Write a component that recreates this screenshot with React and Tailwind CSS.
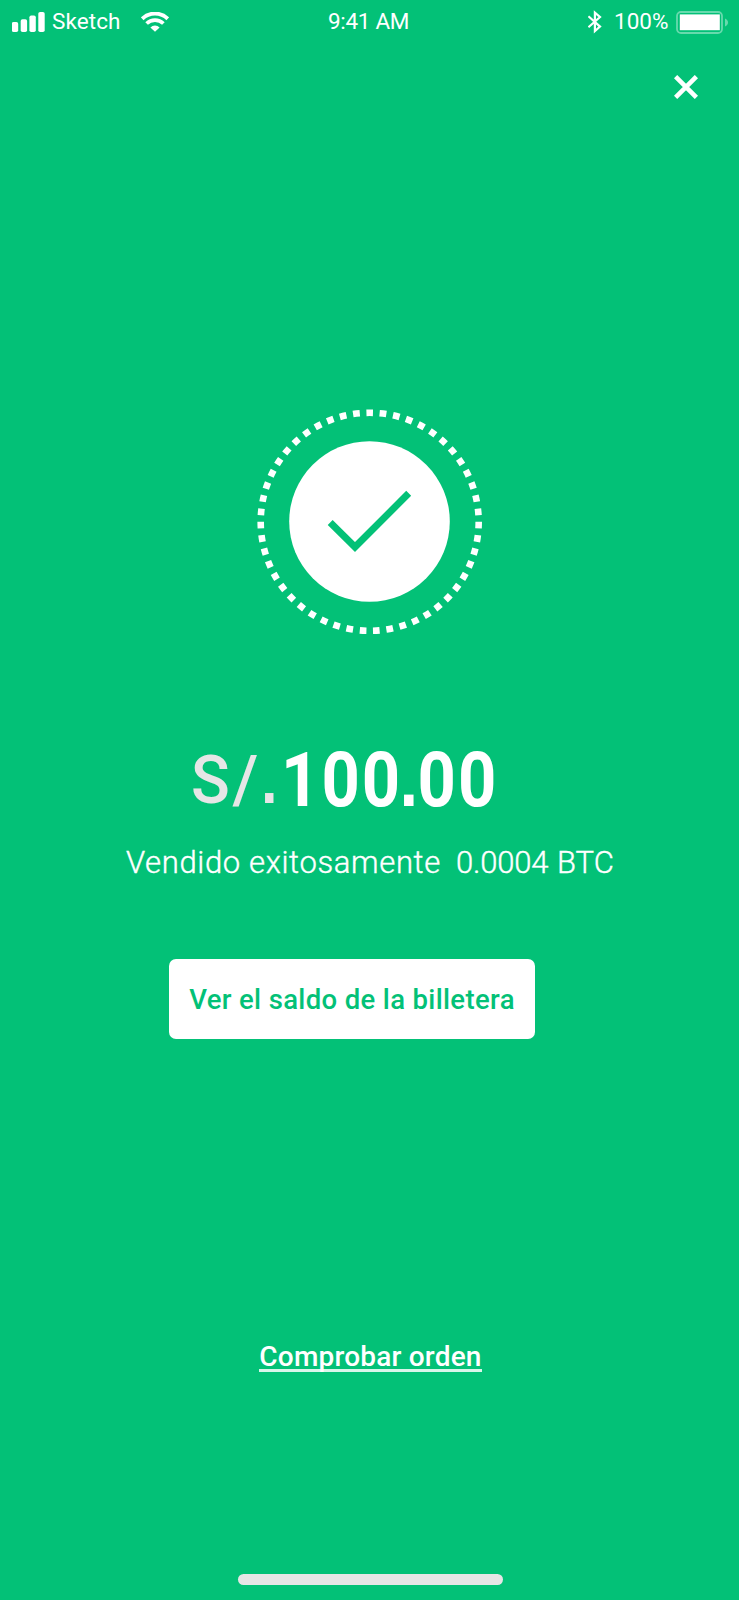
const RING_DASHES = 51;

function SignalBars() {
  return (
    <svg className="h-5 w-[33px]" viewBox="0 0 33 20" fill="currentColor">
      <rect x="-0.2" y="10" width="6.4" height="10" rx="1.8" />
      <rect x="8.7" y="7.2" width="6.4" height="12.8" rx="1.8" />
      <rect x="17.4" y="3.4" width="6.4" height="16.6" rx="1.8" />
      <rect x="26.3" y="0" width="6.4" height="20" rx="1.8" />
    </svg>
  );
}

function WifiIcon() {
  return (
    <svg className="h-5 w-7" viewBox="0 0 28 20" fill="none" stroke="currentColor" strokeWidth="4">
      <path d="M1.2 6.8a18.4 18.4 0 0 1 25.6 0" />
      <path d="M5.6 11.5a12 12 0 0 1 16.8 0" strokeWidth="3.7" />
      <path d="M9.4 15.4a6.5 6.5 0 0 1 9.2 0L14 19.8z" fill="currentColor" stroke="none" />
    </svg>
  );
}

function BluetoothIcon() {
  return (
    <svg className="h-6 w-[14px]" viewBox="0 0 14 24" fill="none" stroke="currentColor" strokeWidth="2.2">
      <path d="M0.4 6.2 12 16.6 6.9 21V2.6L12 7 0.4 17.3" />
    </svg>
  );
}

function BatteryIcon() {
  return (
    <svg className="h-[23px] w-[52px]" viewBox="0 0 52 23" fill="none">
      <rect x="1" y="1" width="45" height="21" rx="4" stroke="white" strokeOpacity="0.4" strokeWidth="1.8" />
      <rect x="3.8" y="3.4" width="40" height="15.8" fill="white" />
      <path d="M49 7.5c4 1.6 4 6.4 0 8z" fill="white" fillOpacity="0.4" />
    </svg>
  );
}

function StatusBar() {
  return (
    <header className="flex h-11 w-full items-start pt-2.5 text-[22.5px] leading-[22px]">
      <div className="ml-3 mt-0.5">
        <SignalBars />
      </div>
      <span className="ml-[7px] w-[89px] whitespace-nowrap tracking-[0.1px]">Sketch</span>
      <div className="mt-0.5">
        <WifiIcon />
      </div>
      <span className="ml-[159px] w-[260px] whitespace-nowrap tracking-[-0.3px]">9:41 AM</span>
      <BluetoothIcon />
      <span className="ml-3 w-[62px] whitespace-nowrap">100%</span>
      <div className="mt-px">
        <BatteryIcon />
      </div>
    </header>
  );
}

function SuccessBadge() {
  return (
    <svg className="h-[226px] w-[226px]" viewBox="0 0 226 226" fill="none">
      <circle
        cx="112.7"
        cy="112.8"
        r="109"
        stroke="white"
        strokeWidth="6.6"
        pathLength={RING_DASHES * 2}
        strokeDasharray="1 1"
        strokeDashoffset="0.5"
        transform="rotate(-90 112.7 112.8)"
      />
      <circle cx="112.5" cy="112.5" r="80.3" fill="white" />
      <path d="M73.2 113.4 98 138 151.7 84.3" stroke="#03c177" strokeWidth="7" />
    </svg>
  );
}

// Square decimal point, the rest of the amount is set in Roboto
function Point() {
  return <span className="font-['Liberation_Sans',sans-serif]">.</span>;
}

function Amount() {
  return (
    <div className="ml-[191px] mt-[99px] flex h-[90px] items-start whitespace-nowrap">
      <span className="w-[90px] text-[66px] leading-[92px] text-[#e6e6e6]">
        <span className="inline-block w-[41.5px] origin-left scale-x-[0.97] font-medium">S</span>
        <span className="inline-block w-[28px] font-medium">/</span>
        <span className="inline-block origin-left scale-x-[0.9] font-bold">
          <Point />
        </span>
      </span>
      <span className="origin-left scale-x-[0.88] text-[76px] font-bold leading-[92px] tracking-[2.3px]">
        100
        <span className="-mx-[3px]">
          <Point />
        </span>
        00
      </span>
    </div>
  );
}

export default function App() {
  return (
    <main className="flex h-[1600px] w-[739px] flex-col items-start overflow-hidden bg-[#03c177] font-['Roboto',sans-serif] text-white">
      <StatusBar />

      <button type="button" aria-label="Cerrar" className="ml-[673.5px] mt-[30.5px]">
        <svg className="h-6 w-6" viewBox="0 0 24 24" fill="none" stroke="currentColor" strokeWidth="4.6">
          <path d="m1.6 1.6 20.8 20.8M22.4 1.6 1.6 22.4" />
        </svg>
      </button>

      <div className="ml-[257px] mt-[310.5px]">
        <SuccessBadge />
      </div>

      <Amount />

      <p className="ml-[126px] mt-[19px] flex h-10 whitespace-nowrap text-[31px] font-light leading-10 [-webkit-text-stroke:0.4px_white]">
        <span className="w-[330px] tracking-[0.65px]">Vendido exitosamente</span>
        <span className="w-[101px] tracking-[-0.2px]">0.0004</span>
        <span>BTC</span>
      </p>

      <button
        type="button"
        className="ml-[169px] mt-[76px] flex h-20 w-[366px] items-center justify-center whitespace-nowrap rounded-[7px] bg-white pt-0.5 text-[27.5px] font-medium tracking-[0.35px] text-[#03c177]"
      >
        Ver el saldo de la billetera
      </button>

      <a
        href="#orden"
        className="ml-[259px] mt-[298px] flex h-[35px] w-[223px] justify-center whitespace-nowrap border-b-[3px] border-white/85 text-[28px] font-medium leading-[40px] tracking-[0.2px]"
      >
        Comprobar orden
      </a>

      <div className="ml-[238px] mt-[202px] h-[11px] w-[265px] rounded-full bg-[#e6e6e6]" />
    </main>
  );
}
